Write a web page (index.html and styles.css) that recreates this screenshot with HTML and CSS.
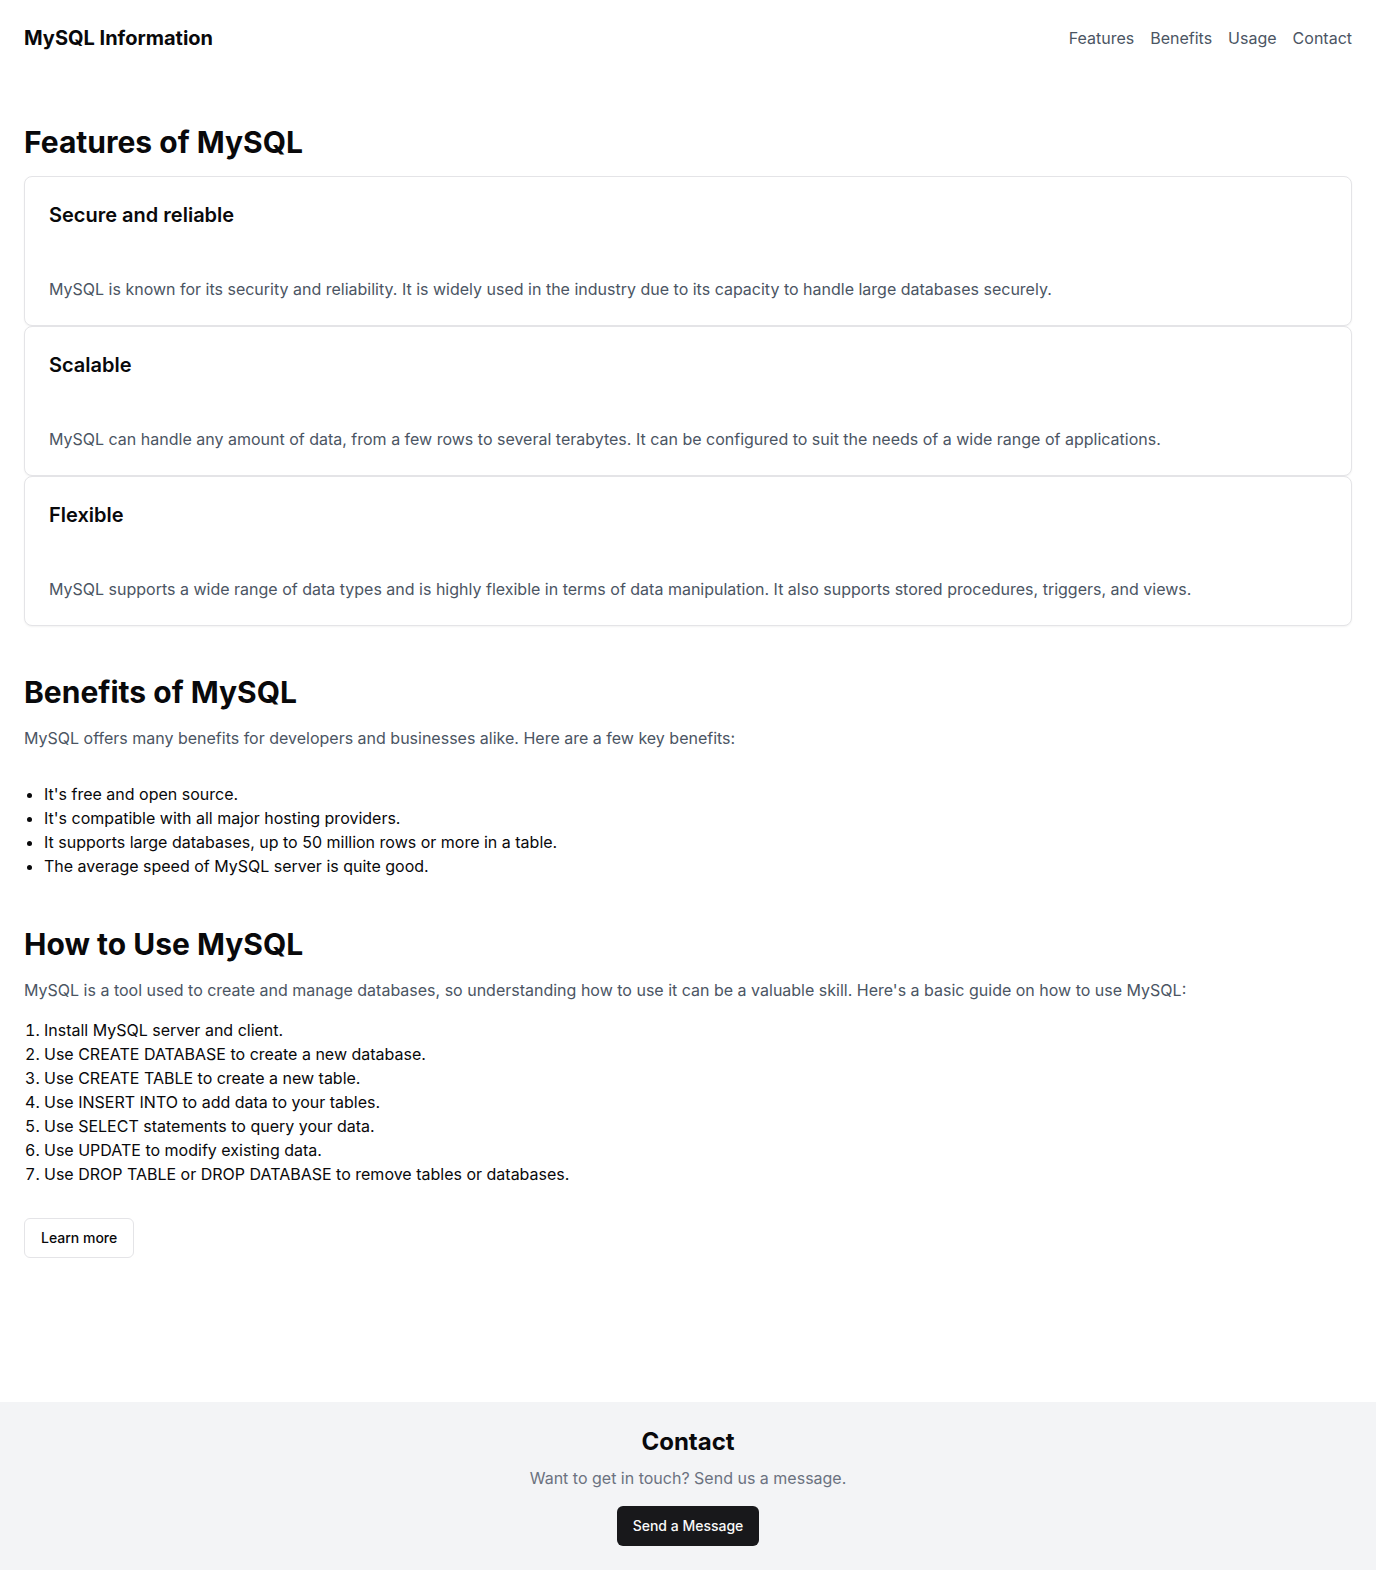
FILE: index.html
```html
<!DOCTYPE html>
<html lang="en">
<head>
<meta charset="utf-8">
<title>MySQL Information</title>
<link rel="stylesheet" href="styles.css">
</head>
<body>
<div class="page">
  <header class="site-header">
    <div class="brand">MySQL Information</div>
    <nav class="nav">
      <a href="#features">Features</a>
      <a href="#benefits">Benefits</a>
      <a href="#usage">Usage</a>
      <a href="#contact">Contact</a>
    </nav>
  </header>
  <main class="main">
    <section class="section" id="features">
      <h2 class="h2">Features of MySQL</h2>
      <div class="cards">
        <div class="card">
          <div class="card-header"><h3 class="card-title">Secure and reliable</h3></div>
          <div class="card-content"><p class="muted">MySQL is known for its security and reliability. It is widely used in the industry due to its capacity to handle large databases securely.</p></div>
        </div>
        <div class="card">
          <div class="card-header"><h3 class="card-title">Scalable</h3></div>
          <div class="card-content"><p class="muted">MySQL can handle any amount of data, from a few rows to several terabytes. It can be configured to suit the needs of a wide range of applications.</p></div>
        </div>
        <div class="card">
          <div class="card-header"><h3 class="card-title">Flexible</h3></div>
          <div class="card-content"><p class="muted">MySQL supports a wide range of data types and is highly flexible in terms of data manipulation. It also supports stored procedures, triggers, and views.</p></div>
        </div>
      </div>
    </section>
    <section class="section" id="benefits">
      <h2 class="h2">Benefits of MySQL</h2>
      <p class="muted">MySQL offers many benefits for developers and businesses alike. Here are a few key benefits:</p>
      <ul class="bullets">
        <li>It's free and open source.</li>
        <li>It's compatible with all major hosting providers.</li>
        <li>It supports large databases, up to 50 million rows or more in a table.</li>
        <li>The average speed of MySQL server is quite good.</li>
      </ul>
    </section>
    <section class="section" id="usage">
      <h2 class="h2">How to Use MySQL</h2>
      <p class="muted">MySQL is a tool used to create and manage databases, so understanding how to use it can be a valuable skill. Here's a basic guide on how to use MySQL:</p>
      <ol class="steps">
        <li>Install MySQL server and client.</li>
        <li>Use CREATE DATABASE to create a new database.</li>
        <li>Use CREATE TABLE to create a new table.</li>
        <li>Use INSERT INTO to add data to your tables.</li>
        <li>Use SELECT statements to query your data.</li>
        <li>Use UPDATE to modify existing data.</li>
        <li>Use DROP TABLE or DROP DATABASE to remove tables or databases.</li>
      </ol>
      <button class="btn btn-outline" type="button">Learn more</button>
    </section>
  </main>
  <footer class="footer" id="contact">
    <h2 class="footer-title">Contact</h2>
    <p class="footer-text">Want to get in touch? Send us a message.</p>
    <button class="btn btn-dark" type="button">Send a Message</button>
  </footer>
</div>
</body>
</html>
```

FILE: styles.css
```css
* { box-sizing: border-box; margin: 0; padding: 0; }
html, body { height: 100%; }
body {
  font-family: Inter, "Noto Sans", sans-serif;
  color: #09090b;
  background: #ffffff;
  font-size: 16px;
  line-height: 24px;
}
.page {
  min-height: 100vh;
  display: flex;
  flex-direction: column;
}
.site-header {
  display: flex;
  justify-content: space-between;
  align-items: center;
  padding: 24px;
}
.brand {
  font-size: 20px;
  line-height: 28px;
  font-weight: 700;
}
.nav {
  display: flex;
  gap: 16px;
}
.nav a {
  color: #4b5563;
  text-decoration: none;
  font-size: 16px;
  line-height: 24px;
}
.main {
  flex: 1;
  padding: 48px 24px 48px;
  display: flex;
  flex-direction: column;
  gap: 48px;
}
.h2 {
  font-size: 30px;
  line-height: 36px;
  font-weight: 700;
  margin-bottom: 16px;
}
.cards { display: flex; flex-direction: column; }
.card {
  border: 1px solid #e4e4e7;
  border-radius: 8px;
  background: #fff;
  box-shadow: 0 1px 2px rgba(0,0,0,0.05);
}
.card-header { padding: 24px 24px 24px; }
.card-title {
  font-size: 20px;
  line-height: 28px;
  font-weight: 600;
}
.card-content { padding: 24px; }
.muted { color: #4b5563; }
.bullets {
  list-style: disc;
  padding-left: 20px;
  margin-top: 32px;
}
.steps {
  list-style: decimal;
  padding-left: 20px;
  margin-top: 16px;
}
.btn {
  font-family: inherit;
  font-size: 14px;
  line-height: 20px;
  font-weight: 500;
  height: 40px;
  padding: 0 16px;
  border-radius: 6px;
  cursor: pointer;
}
.btn-outline {
  margin-top: 32px;
  background: #fff;
  color: #09090b;
  border: 1px solid #e4e4e7;
}
.footer {
  background: #f3f4f6;
  padding: 24px;
  display: flex;
  flex-direction: column;
  align-items: center;
}
.footer-title {
  font-size: 24px;
  line-height: 32px;
  font-weight: 700;
  margin-bottom: 8px;
}
.footer-text {
  color: #6b7280;
  margin-bottom: 16px;
}
.btn-dark {
  background: #18181b;
  color: #fafafa;
  border: none;
}
```
